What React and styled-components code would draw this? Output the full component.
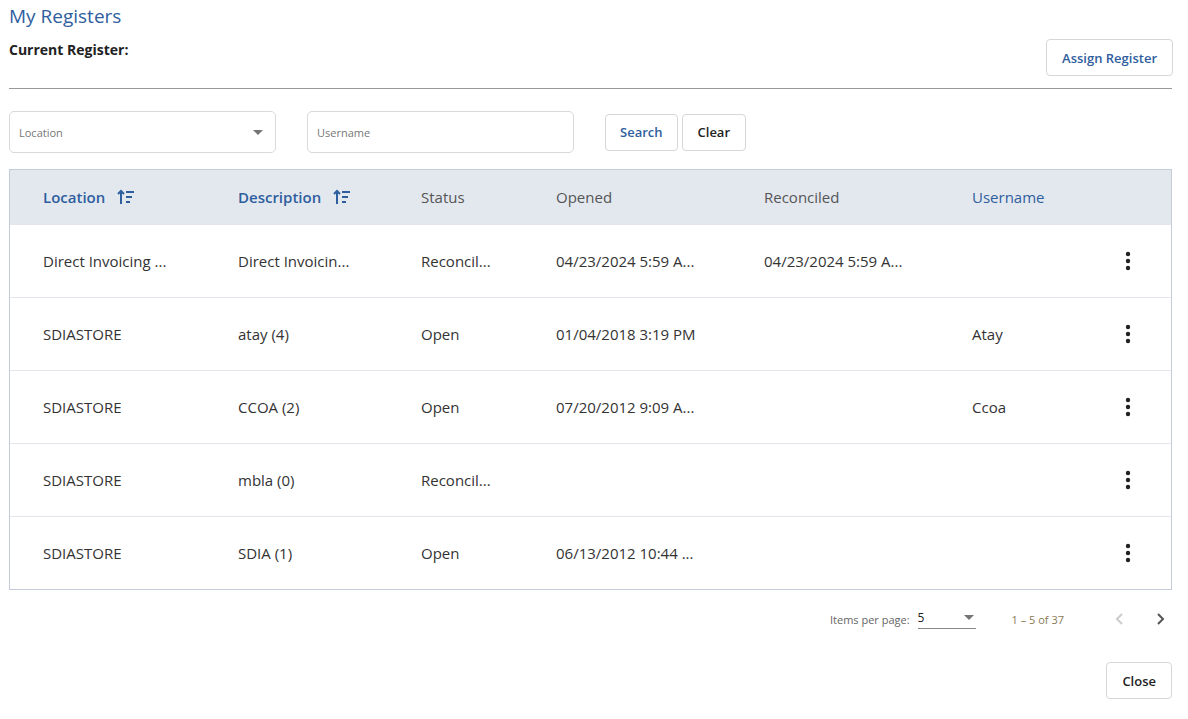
import styled, { createGlobalStyle } from "styled-components";

const Global = createGlobalStyle`
  body { margin: 0; font-family: "Open Sans", "Noto Sans", sans-serif; color: #222; background: #fff; }
`;

const Page = styled.div`
  padding: 4px 16px 0 9px;
  width: 1163px;
`;

const Title = styled.h1`
  margin: 0;
  font-size: 19px;
  font-weight: 400;
  color: #2f5e9e;
  line-height: 24px;
`;

const HeadRow = styled.div`
  display: flex;
  justify-content: space-between;
  align-items: flex-start;
  height: 60px;
  border-bottom: 1px solid #999;
  margin-bottom: 22px;
`;

const Current = styled.div`
  font-size: 14px;
  font-weight: 700;
  margin-top: 12px;
`;

const Button = styled.button`
  font-family: inherit;
  font-size: 13px;
  font-weight: 600;
  color: ${({ $primary }) => ($primary ? "#2f5e9e" : "#222")};
  background: #fff;
  border: 1px solid #d6d6d6;
  border-radius: 4px;
  height: ${({ $h }) => $h || 37}px;
  padding: 0 ${({ $px }) => $px || 15}px;
  cursor: pointer;
`;

const Filters = styled.div`
  display: flex;
  align-items: center;
  gap: 31px;
  margin-bottom: 16px;
`;

const Field = styled.div`
  width: 267px;
  height: 42px;
  border: 1px solid #d9d9d9;
  border-radius: 5px;
  display: flex;
  align-items: center;
  justify-content: space-between;
  padding: 0 12px 0 9px;
  box-sizing: border-box;
  font-size: 11px;
  color: #777;
`;

const Caret = styled.span`
  width: 0;
  height: 0;
  border-left: 5px solid transparent;
  border-right: 5px solid transparent;
  border-top: 5px solid #757575;
`;

const Buttons = styled.div`
  display: flex;
  gap: 4px;
`;

const Table = styled.div`
  border: 1px solid #c3ccd8;
`;

const Grid = styled.div`
  display: grid;
  grid-template-columns: 195px 183px 135px 208px 208px 124px 1fr;
  align-items: center;
  padding-left: 33px;
  height: ${({ $head }) => ($head ? 54 : 72)}px;
  background: ${({ $head }) => ($head ? "#e3e8ef" : "#fff")};
  border-top: ${({ $head }) => ($head ? "none" : "1px solid #e3e6ea")};
  font-size: 15px;
`;

const Th = styled.div`
  display: flex;
  align-items: center;
  gap: 12px;
  color: ${({ $blue }) => ($blue ? "#2f5e9e" : "#555")};
  font-weight: ${({ $bold }) => ($bold ? 600 : 400)};
`;

const Td = styled.div`
  color: #333;
  white-space: nowrap;
`;

const Kebab = styled.div`
  display: flex;
  justify-content: flex-end;
  padding-right: 40px;
`;

const Pager = styled.div`
  display: flex;
  align-items: center;
  justify-content: flex-end;
  height: 58px;
  font-size: 11px;
  color: #666;
`;

const PerPage = styled.div`
  display: flex;
  align-items: center;
  justify-content: space-between;
  width: 56px;
  margin-left: 8px;
  border-bottom: 1px solid #888;
  padding: 0 2px 2px 0;
  color: #222;
  font-size: 12px;
`;

const Range = styled.span`
  margin: 0 44px 0 36px;
  color: #8a7a55;
`;

const Footer = styled.div`
  display: flex;
  justify-content: flex-end;
  margin-top: 14px;
`;

const SortIcon = () => (
  <svg width="18" height="16" viewBox="0 0 18 16" fill="none" stroke="#2f5e9e" strokeWidth="2">
    <path d="M4 15V2M1 5l3-3 3 3" />
    <path d="M9 3h8M9 8h6M9 13h4" />
  </svg>
);

const Dots = () => (
  <svg width="6" height="20" viewBox="0 0 6 20" fill="#222">
    <circle cx="3" cy="3" r="2.2" />
    <circle cx="3" cy="10" r="2.2" />
    <circle cx="3" cy="17" r="2.2" />
  </svg>
);

const Chevron = ({ dir, color }) => (
  <svg width="24" height="24" viewBox="0 0 24 24" fill="none" stroke={color} strokeWidth="2">
    <path d={dir === "left" ? "M14 7l-5 5 5 5" : "M10 7l5 5-5 5"} />
  </svg>
);

const rows = [
  ["Direct Invoicing ...", "Direct Invoicin...", "Reconcil...", "04/23/2024 5:59 A...", "04/23/2024 5:59 A...", ""],
  ["SDIASTORE", "atay (4)", "Open", "01/04/2018 3:19 PM", "", "Atay"],
  ["SDIASTORE", "CCOA (2)", "Open", "07/20/2012 9:09 A...", "", "Ccoa"],
  ["SDIASTORE", "mbla (0)", "Reconcil...", "", "", ""],
  ["SDIASTORE", "SDIA (1)", "Open", "06/13/2012 10:44 ...", "", ""],
];

export default function App() {
  return (
    <Page>
      <Global />
      <Title>My Registers</Title>
      <HeadRow>
        <Current>Current Register:</Current>
        <Button $primary style={{ marginTop: 11, marginRight: -1 }}>Assign Register</Button>
      </HeadRow>
      <Filters>
        <Field>
          Location <Caret />
        </Field>
        <Field>Username</Field>
        <Buttons>
          <Button $primary $px={14}>Search</Button>
          <Button $px={15}>Clear</Button>
        </Buttons>
      </Filters>
      <Table>
        <Grid $head>
          <Th $blue $bold>Location <SortIcon /></Th>
          <Th $blue $bold>Description <SortIcon /></Th>
          <Th>Status</Th>
          <Th>Opened</Th>
          <Th>Reconciled</Th>
          <Th $blue>Username</Th>
          <div />
        </Grid>
        {rows.map((r, i) => (
          <Grid key={i}>
            {r.map((c, j) => (
              <Td key={j}>{c}</Td>
            ))}
            <Kebab><Dots /></Kebab>
          </Grid>
        ))}
      </Table>
      <Pager>
        Items per page:
        <PerPage>
          5 <Caret />
        </PerPage>
        <Range>1 – 5 of 37</Range>
        <Chevron dir="left" color="#ccc" />
        <span style={{ width: 16 }} />
        <Chevron dir="right" color="#555" />
      </Pager>
      <Footer>
        <Button $px={15}>Close</Button>
      </Footer>
    </Page>
  );
}
